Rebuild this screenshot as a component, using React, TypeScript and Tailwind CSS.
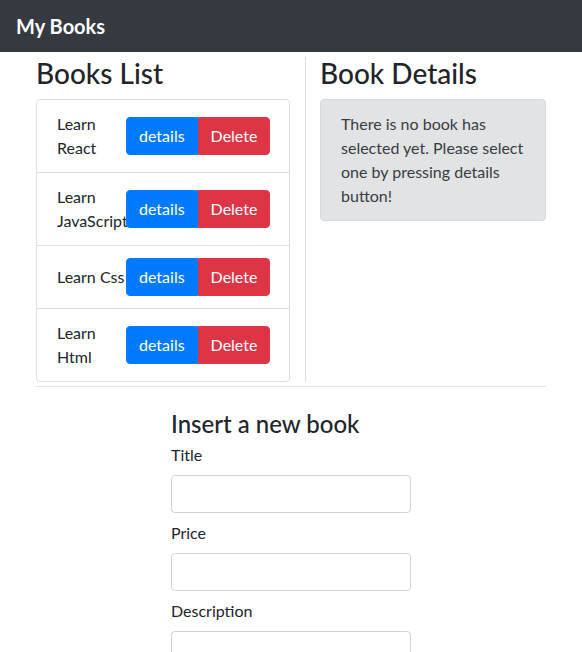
import { useState } from "react";

type Book = { id: number; title: string };

const initialBooks: Book[] = [
  { id: 1, title: "Learn React" },
  { id: 2, title: "Learn JavaScript" },
  { id: 3, title: "Learn Css" },
  { id: 4, title: "Learn Html" },
];

export default function App() {
  const [books, setBooks] = useState<Book[]>(initialBooks);
  const [selected, setSelected] = useState<Book | null>(null);

  return (
    <div className="min-h-screen bg-white text-[#212529] font-['Segoe_UI',Lato,sans-serif] text-base leading-6">
      <nav className="h-[52px] bg-[#343a40] flex items-center px-4">
        <span className="text-white text-xl font-bold">My Books</span>
      </nav>

      <div className="w-[510px] mx-auto">
        <div className="flex mt-[5px]">
          <div className="w-[269px] pr-[15px]">
            <h3 className="text-[28px] leading-[1.2] font-medium mb-2">Books List</h3>
            <ul className="w-[254px] border border-[#dfdfdf] rounded">
              {books.map((b) => (
                <li
                  key={b.id}
                  className="flex items-center py-3 px-5 border-b border-[#dfdfdf] last:border-b-0"
                >
                  <span className="w-[69px] shrink-0 whitespace-normal">{b.title}</span>
                  <div className="flex">
                    <button
                      className="bg-[#007bff] border border-[#007bff] text-white px-3 py-1.5 leading-6 rounded-l"
                      onClick={() => setSelected(b)}
                    >
                      details
                    </button>
                    <button
                      className="bg-[#dc3545] border border-[#dc3545] text-white px-3 py-1.5 leading-6 rounded-r"
                      onClick={() => setBooks(books.filter((x) => x.id !== b.id))}
                    >
                      Delete
                    </button>
                  </div>
                </li>
              ))}
            </ul>
          </div>
          <div className="flex-1 border-l border-[#dfdfdf] pl-[14px]">
            <h3 className="text-[28px] leading-[1.2] font-medium mb-2">Book Details</h3>
            {selected ? (
              <div className="border border-[#d6d8db] bg-[#e2e3e5] text-[#383d41] rounded py-3 px-5">
                {selected.title}
              </div>
            ) : (
              <div className="border border-[#d6d8db] bg-[#e2e3e5] text-[#383d41] rounded py-3 px-5">
                There is no book has selected yet. Please select one by pressing details button!
              </div>
            )}
          </div>
        </div>

        <hr className="mt-1 border-t border-[#e5e5e5]" />

        <div className="w-[240px] mx-auto mt-[23px]">
          <h4 className="text-2xl leading-[1.2] font-medium mb-[5px]">Insert a new book</h4>
          <label className="block mb-2">Title</label>
          <input className="block w-full h-[38px] border border-[#ced4da] rounded mb-2" />
          <label className="block mb-2">Price</label>
          <input className="block w-full h-[38px] border border-[#ced4da] rounded mb-2" />
          <label className="block mb-2">Description</label>
          <input className="block w-full h-[38px] border border-[#ced4da] rounded mb-2" />
        </div>
      </div>
    </div>
  );
}
